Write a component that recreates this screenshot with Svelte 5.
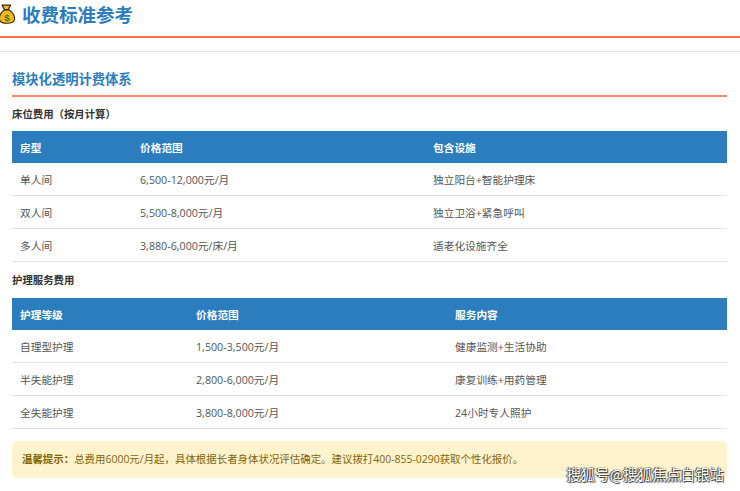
<script>
	const roomRows = [
		['单人间', '6,500-12,000元/月', '独立阳台+智能护理床'],
		['双人间', '5,500-8,000元/月', '独立卫浴+紧急呼叫'],
		['多人间', '3,880-6,000元/床/月', '适老化设施齐全']
	];
	const careRows = [
		['自理型护理', '1,500-3,500元/月', '健康监测+生活协助'],
		['半失能护理', '2,800-6,000元/月', '康复训练+用药管理'],
		['全失能护理', '3,800-8,000元/月', '24小时专人照护']
	];
</script>

<div class="page">
	<header class="title-bar">
		<svg class="bag" viewBox="0 0 18 22" width="16" height="20">
			<path d="M3.500 1h9.500l-2.500 5h-4.500z" fill="#f5b81f" stroke="#3a2a10" stroke-width="1.400" stroke-linejoin="round" />
			<path d="M6 6.500h5.500c3.500 2.500 6 6 6 9.500 0 4-3.500 5.500-8.500 5.500S.5 20 .5 16c0-3.500 2-7 5.500-9.500z" fill="#f5b81f" stroke="#3a2a10" stroke-width="1.200" />
			<text x="9" y="18.500" text-anchor="middle" class="dollar">$</text>
		</svg>
		<h1>收费标准参考</h1>
	</header>

	<div class="sep"></div>

	<section class="content">
		<h2>模块化透明计费体系</h2>

		<h3>床位费用（按月计算）</h3>
		<table>
			<colgroup><col style="width:120px" /><col style="width:293px" /><col /></colgroup>
			<thead>
				<tr><th>房型</th><th>价格范围</th><th>包含设施</th></tr>
			</thead>
			<tbody>
				{#each roomRows as row}
					<tr>{#each row as cell}<td>{cell}</td>{/each}</tr>
				{/each}
			</tbody>
		</table>

		<h3 class="second">护理服务费用</h3>
		<table>
			<colgroup><col style="width:176px" /><col style="width:259px" /><col /></colgroup>
			<thead>
				<tr><th>护理等级</th><th>价格范围</th><th>服务内容</th></tr>
			</thead>
			<tbody>
				{#each careRows as row}
					<tr>{#each row as cell}<td>{cell}</td>{/each}</tr>
				{/each}
			</tbody>
		</table>

		<div class="tip"><strong>温馨提示：</strong>总费用6000元/月起，具体根据长者身体状况评估确定。建议拨打400-855-0290获取个性化报价。</div>
	</section>

	<div class="watermark">搜狐号@搜狐焦点白银站</div>
</div>

<style>
	:global(body) {
		margin: 0;
		background: #fff;
	}

	.page {
		position: relative;
		width: 740px;
		height: 491px;
		overflow: hidden;
		font-family: "Open Sans", "Noto Sans CJK SC", sans-serif;
		color: #333;
	}

	.title-bar {
		display: flex;
		align-items: center;
		gap: 7px;
		box-sizing: border-box;
		height: 38px;
		padding-bottom: 6px;
		border-bottom: 2px solid #ff7043;
		margin-left: -1px;
	}

	.bag {
		flex: none;
		margin-top: -2px;
	}

	.dollar {
		font-size: 11px;
		font-weight: 700;
		fill: #2e7d32;
		font-family: "Liberation Sans", sans-serif;
	}

	h1 {
		margin: 0;
		font-size: 18.5px;
		font-weight: 700;
		color: #2b7dbd;
		line-height: 30px;
	}

	.sep {
		height: 13px;
		border-bottom: 1px solid #e6e6e6;
	}

	.content {
		padding: 0 13px 0 12px;
	}

	h2 {
		margin: 19px 0 0;
		font-size: 13.3px;
		line-height: 16px;
		font-weight: 700;
		color: #2b7dbd;
		padding-bottom: 8px;
		border-bottom: 2px solid #ff8a65;
	}

	h3 {
		margin: 9px 0;
		font-size: 10.4px;
		line-height: 16px;
		font-weight: 700;
		color: #333;
	}

	h3.second {
		margin: 10px 0;
	}

	table {
		width: 100%;
		border-collapse: collapse;
		table-layout: fixed;
		font-size: 10.7px;
	}

	th {
		background: #2b7dbd;
		color: #fff;
		font-weight: 700;
		text-align: left;
		height: 32px;
		padding: 0 8px;
	}

	td {
		height: 32px;
		padding: 0 8px;
		border-bottom: 1px solid #e4e4e4;
		color: #555;
	}

	.tip {
		margin-top: 12px;
		height: 37px;
		line-height: 37px;
		padding-left: 10px;
		background: #fff3cd;
		border-radius: 5px;
		font-size: 10.45px;
		color: #856404;
	}

	.tip strong {
		font-weight: 700;
	}

	.watermark {
		position: absolute;
		right: 16px;
		top: 465px;
		font-size: 14.4px;
		line-height: 18px;
		color: #fff;
		font-family: "Noto Sans CJK SC", sans-serif;
		text-shadow: 0 0 1px #222, 1px 1px 1px #333, -1px 0 1px #333;
	}
</style>
